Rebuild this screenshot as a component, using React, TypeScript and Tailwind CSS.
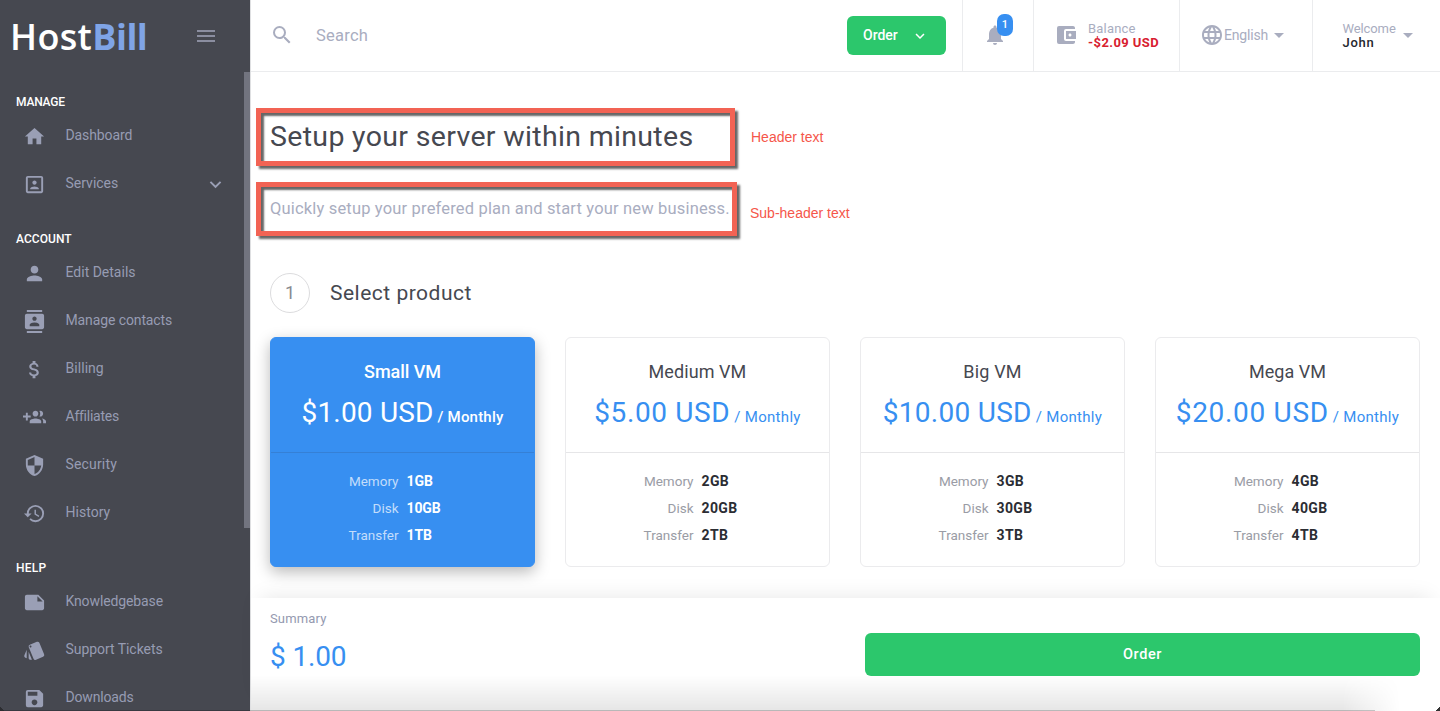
import React from 'react';
import {
  MdAccountBalanceWallet,
  MdArrowDropDown,
  MdAttachMoney,
  MdContacts,
  MdHistory,
  MdHome,
  MdKeyboardArrowDown,
  MdLanguage,
  MdMenu,
  MdNotifications,
  MdPerson,
  MdPortrait,
  MdSave,
  MdSearch,
  MdSecurity,
  MdStyle,
} from 'react-icons/md';

type NavItem = { label: string; icon: React.ReactNode; tracking: string; expandable?: boolean };
type NavGroup = { title: string; tracking: string; items: NavItem[] };

function GroupAddIcon() {
  return (
    <svg viewBox="0 0 24 24" width="23" height="23" fill="currentColor">
      <path d="M8 10H5V7H3v3H0v2h3v3h2v-3h3v-2zm10 1c1.66 0 2.99-1.34 2.99-3S19.66 5 18 5c-.32 0-.63.05-.91.14.57.81.9 1.79.9 2.86s-.34 2.04-.9 2.86c.28.09.59.14.91.14zm-5 0c1.66 0 2.99-1.34 2.99-3S14.66 5 13 5c-1.66 0-3 1.34-3 3s1.34 3 3 3zm6.62 2.16c.83.73 1.38 1.66 1.38 2.84v2h3v-2c0-1.54-2.37-2.49-4.38-2.84zM13 13c-2 0-6 1-6 3v2h12v-2c0-2-4-3-6-3z" />
    </svg>
  );
}

function NoteIcon() {
  return (
    <svg viewBox="0 0 24 24" width="23" height="23" fill="currentColor">
      <path d="M22 10l-6-6H4c-1.1 0-2 .9-2 2v12.01c0 1.1.9 1.99 2 1.99l16-.01c1.1 0 2-.89 2-1.99v-8zm-7-4.5l5.5 5.5H15V5.500z" />
    </svg>
  );
}

const NAV: NavGroup[] = [
  {
    title: 'MANAGE',
    tracking: 'tracking-[-0.2px]',
    items: [
      { label: 'Dashboard', icon: <MdHome size={23} />, tracking: 'tracking-[-0.1px]' },
      { label: 'Services', icon: <MdPortrait size={23} />, tracking: 'tracking-normal', expandable: true },
    ],
  },
  {
    title: 'ACCOUNT',
    tracking: 'tracking-[0.05px]',
    items: [
      { label: 'Edit Details', icon: <MdPerson size={23} />, tracking: 'tracking-normal' },
      { label: 'Manage contacts', icon: <MdContacts size={23} />, tracking: 'tracking-[-0.11px]' },
      { label: 'Billing', icon: <MdAttachMoney size={23} />, tracking: 'tracking-[0.05px]' },
      { label: 'Affiliates', icon: <GroupAddIcon />, tracking: 'tracking-[-0.25px]' },
      { label: 'Security', icon: <MdSecurity size={23} />, tracking: 'tracking-[0.16px]' },
      { label: 'History', icon: <MdHistory size={23} />, tracking: 'tracking-[0.02px]' },
    ],
  },
  {
    title: 'HELP',
    tracking: 'tracking-[0.25px]',
    items: [
      { label: 'Knowledgebase', icon: <NoteIcon />, tracking: 'tracking-[-0.12px]' },
      { label: 'Support Tickets', icon: <MdStyle size={23} />, tracking: 'tracking-[-0.05px]' },
      { label: 'Downloads', icon: <MdSave size={23} />, tracking: 'tracking-[-0.16px]' },
    ],
  },
];

type Plan = {
  name: string;
  nameTracking: string;
  price: string;
  priceTracking: string;
  specs: [string, string][];
};

const PLANS: Plan[] = [
  {
    name: 'Small VM',
    nameTracking: 'tracking-[-0.05px]',
    price: '$1.00 USD',
    priceTracking: 'tracking-[0.18px]',
    specs: [['Memory', '1GB'], ['Disk', '10GB'], ['Transfer', '1TB']],
  },
  {
    name: 'Medium VM',
    nameTracking: 'tracking-[0.08px]',
    price: '$5.00 USD',
    priceTracking: 'tracking-[0.62px]',
    specs: [['Memory', '2GB'], ['Disk', '20GB'], ['Transfer', '2TB']],
  },
  {
    name: 'Big VM',
    nameTracking: 'tracking-[0.2px]',
    price: '$10.00 USD',
    priceTracking: 'tracking-[0.28px]',
    specs: [['Memory', '3GB'], ['Disk', '30GB'], ['Transfer', '3TB']],
  },
  {
    name: 'Mega VM',
    nameTracking: 'tracking-normal',
    price: '$20.00 USD',
    priceTracking: 'tracking-[0.68px]',
    specs: [['Memory', '4GB'], ['Disk', '40GB'], ['Transfer', '4TB']],
  },
];

function Sidebar() {
  return (
    <aside className="flex h-full w-[250px] shrink-0 flex-col overflow-hidden bg-[#464850]">
      <div className="flex h-[72px] shrink-0 items-center justify-between pr-8 pl-2.5">
        <div className="pt-px font-['Open_Sans',sans-serif] text-[36px] leading-[71px] font-semibold tracking-[0.35px] text-white">
          Host<span className="font-bold tracking-[-0.5px] text-[#7fa4e6]">Bill</span>
        </div>
        <MdMenu size={24} className="text-[#8b8ea0]" />
      </div>
      <div className="flex min-h-0 flex-1 items-start justify-between">
        <nav className="flex w-[244px] flex-col gap-[21px] pt-5">
          {NAV.map((group) => (
            <section key={group.title}>
              <h2 className={`pl-4 text-xs leading-5 font-medium text-white ${group.tracking}`}>{group.title}</h2>
              <ul>
                {group.items.map((item) => (
                  <li key={item.label} className="flex h-12 items-center pl-[23px] text-[#9a9fb5]">
                    <span className="mr-[19.5px] pt-px">{item.icon}</span>
                    <span className={`flex-1 pb-0.5 text-sm leading-5 text-[#979cb3] ${item.tracking}`}>
                      {item.label}
                    </span>
                    {item.expandable && <MdKeyboardArrowDown size={23} className="mr-[17px]" />}
                  </li>
                ))}
              </ul>
            </section>
          ))}
        </nav>
        <div className="h-[456px] w-1.5 bg-[#72747f]" />
      </div>
    </aside>
  );
}

function TopBar() {
  return (
    <header className="flex h-[72px] shrink-0 items-stretch border-b border-[#ebecee] text-[#a9adbf]">
      <div className="flex flex-1 items-center pl-[19px]">
        <MdSearch size={24} className="-mt-px" />
        <input
          type="text"
          placeholder="Search"
          className="mt-0.5 ml-[22px] w-80 bg-transparent text-[16.5px] tracking-[0.25px] outline-none placeholder:text-[#a9adbf]"
        />
      </div>
      <div className="flex w-[115px] pt-4">
        <button className="flex h-[39px] w-[99px] items-center justify-between rounded-md bg-[#2cc76c] pr-[17px] pb-px pl-[16px] text-sm font-medium text-white">
          Order
          <MdKeyboardArrowDown size={18} className="mt-px" />
        </button>
      </div>
      <div className="flex w-[71px] items-center border-l border-[#ebecee] pl-[19.5px]">
        <div className="relative -mt-px">
          <MdNotifications size={24} />
          <span className="absolute -top-[9px] left-[14.5px] flex h-[22px] w-4 items-center justify-center rounded-[7px] bg-[#378ff1] text-[11px] font-medium text-white">
            1
          </span>
        </div>
      </div>
      <div className="flex w-[146px] items-center border-l border-[#ebecee] pl-[20px]">
        <MdAccountBalanceWallet size={24} className="-mt-px" />
        <div className="ml-2.5 text-[13px] leading-[14px] whitespace-nowrap">
          <div className="tracking-[0.2px]">Balance</div>
          <div className="font-bold tracking-[0.4px] text-[#d8202f]">-$2.09 USD</div>
        </div>
      </div>
      <div className="flex w-[133px] items-center border-l border-[#ebecee] pl-5">
        <MdLanguage size={24} className="-mt-px" />
        <span className="pb-0.5 text-sm tracking-[-0.17px]">English</span>
        <MdArrowDropDown size={24} className="-mt-px -ml-px" />
      </div>
      <div className="flex w-32 items-center border-l border-[#ebecee] pl-[29.5px]">
        <div className="text-[13px] leading-[14px]">
          <div className="tracking-[-0.1px]">Welcome</div>
          <div className="font-medium tracking-[0.7px] text-[#25272d]">John</div>
        </div>
        <MdArrowDropDown size={24} className="-mt-px" />
      </div>
    </header>
  );
}

function PlanCard({ plan, selected }: { plan: Plan; selected: boolean }) {
  return (
    <article
      className={
        selected
          ? 'h-[230px] rounded-md border border-[#378ff1] bg-[#378ff1] text-white shadow-[0_5px_15px_rgba(0,0,0,0.28)]'
          : 'h-[230px] rounded-md border border-[#ebebed] bg-white text-[#464850]'
      }
    >
      <div className={`h-[115px] border-b pt-5 text-center ${selected ? 'border-[#3580d6]' : 'border-[#e6e6e8]'}`}>
        <h3 className={`text-lg leading-[27px] ${selected ? 'font-medium' : ''} ${plan.nameTracking}`}>{plan.name}</h3>
        <div className={`mt-2 leading-10 whitespace-nowrap ${selected ? '' : 'text-[#378ff1]'}`}>
          <span className={`text-[28px] ${plan.priceTracking}`}>{plan.price}</span>
          <span className={`ml-1 text-[15px] ${selected ? 'font-medium tracking-[0.2px]' : 'tracking-[0.3px]'}`}>
            / Monthly
          </span>
        </div>
      </div>
      <dl className="grid grid-cols-2 gap-x-2 pt-[15px] text-sm leading-[27px]">
        {plan.specs.map(([name, value]) => (
          <React.Fragment key={name}>
            <dt className={`text-right text-[13.5px] ${selected ? 'text-[#c3ddfb]' : 'text-[#9a9ca5]'}`}>{name}</dt>
            <dd className={`font-bold ${selected ? 'tracking-[-0.1px]' : 'tracking-[0.35px] text-[#2b2d33]'}`}>
              {value}
            </dd>
          </React.Fragment>
        ))}
      </dl>
    </article>
  );
}

export default function App() {
  return (
    <div className="relative flex h-[711px] w-[1440px] overflow-hidden bg-white font-[Roboto,sans-serif] text-[#464850]">
      <Sidebar />
      <div className="flex min-w-0 flex-1 flex-col border-l border-[#dfe0e2]">
        <TopBar />
        <main className="flex-1 pt-9 pr-5 pl-[19px]">
          <div className="-ml-[14px] flex items-center">
            <h1 className="h-[58px] w-[479px] border-5 border-[#f26354] pl-[9px] text-[28.5px] leading-[47px] tracking-[0.33px] whitespace-nowrap shadow-[3px_3px_2px_rgba(0,0,0,0.6),inset_3px_3px_2px_rgba(0,0,0,0.6)]">
              Setup your server within minutes
            </h1>
            <span className="ml-4 font-['Liberation_Sans',sans-serif] text-sm text-[#f5564a]">Header text</span>
          </div>
          <div className="mt-4 -ml-[14px] flex items-center">
            <p className="h-[54px] w-[481px] border-5 border-[#f26354] pl-[9px] text-[16.5px] leading-[44px] tracking-[0.17px] whitespace-nowrap text-[#a9adbf] shadow-[3px_3px_2px_rgba(0,0,0,0.6),inset_3px_3px_2px_rgba(0,0,0,0.6)]">
              Quickly setup your prefered plan and start your new business.
            </p>
            <span className="mt-2 ml-[13px] font-['Liberation_Sans',sans-serif] text-sm text-[#f5564a]">
              Sub-header text
            </span>
          </div>
          <div className="mt-[37px] flex items-center">
            <span className="flex size-10 items-center justify-center rounded-full border border-[#dcdcde] text-lg text-[#888a90]">
              1
            </span>
            <h2 className="ml-5 text-[21px] leading-10 tracking-[0.5px]">Select product</h2>
          </div>
          <div className="mt-6 grid grid-cols-4 gap-[30px]">
            {PLANS.map((plan, i) => (
              <PlanCard key={plan.name} plan={plan} selected={i === 0} />
            ))}
          </div>
        </main>
        <footer className="relative flex h-[113px] shrink-0 items-start justify-between bg-white pt-[11px] pr-5 pl-[19px] shadow-[0_-10px_20px_-10px_rgba(0,0,0,0.1)]">
          <div>
            <div className="text-[13px] leading-5 tracking-[0.15px] text-[#9499b0]">Summary</div>
            <div className="mt-2 text-[28px] leading-10 tracking-[-0.15px] text-[#378ff1]">$ 1.00</div>
          </div>
          <button className="mt-6 h-[43px] w-[555px] rounded-md bg-[#2cc76c] text-[14.5px] font-medium tracking-[0.6px] text-white">
            Order
          </button>
        </footer>
      </div>
      <div className="absolute bottom-0 left-[251px] h-9 w-[1149px] bg-linear-to-b from-transparent to-black/10 mask-r-from-95%" />
      <div className="absolute bottom-0 left-0 h-px w-[1375px] bg-black/20" />
      <div className="absolute right-0 bottom-0 size-[5px] bg-linear-to-br from-transparent from-50% to-[#333] to-60%" />
      <div className="absolute bottom-0 left-0 size-[5px] bg-linear-to-bl from-transparent from-50% to-[#2c2d31] to-60%" />
    </div>
  );
}
